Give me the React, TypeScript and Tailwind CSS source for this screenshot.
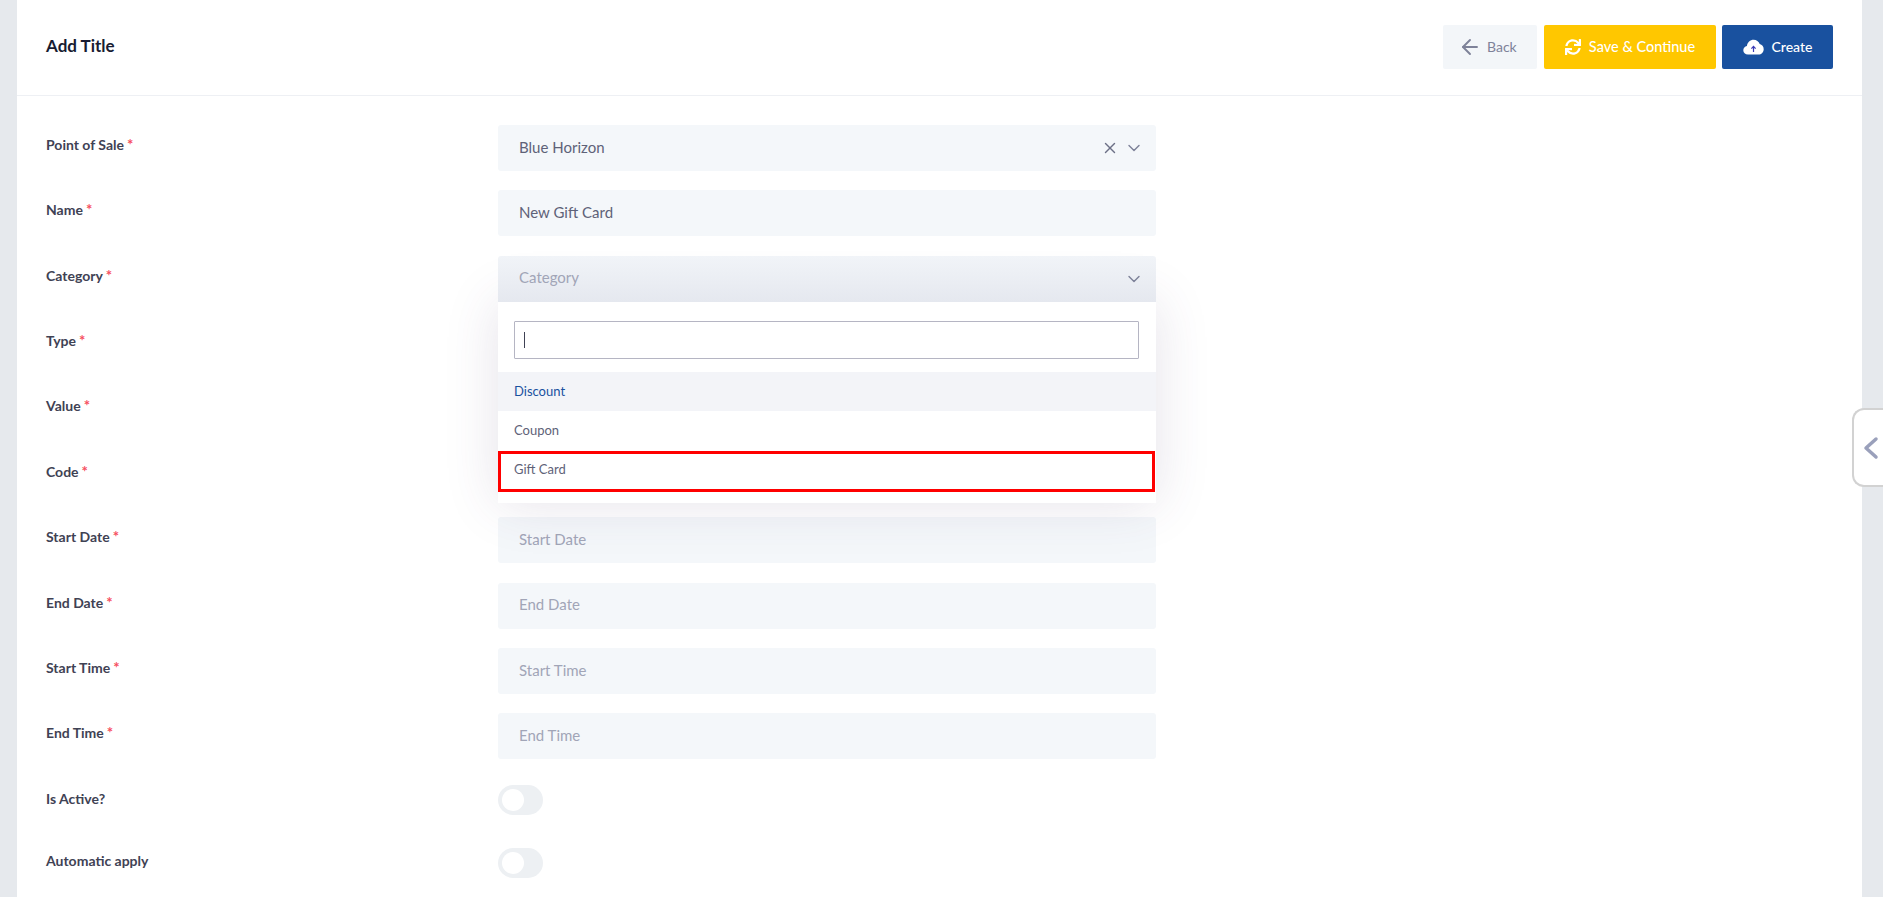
import React from 'react';
import { ArrowLeft, ChevronDown, X } from 'lucide-react';
import { FaSync } from 'react-icons/fa';

const font = "font-['Lato','Liberation_Sans',sans-serif]";

const Label = ({ text, required = true, className = 'pt-[8px]' }: { text: string; required?: boolean; className?: string }) => (
  <label className={`w-[452px] shrink-0 text-[14px] leading-[22px] font-bold text-[#3f4254] ${className}`}>
    {text}
    {required && <span className="ml-[3px] text-[15px] text-[#f64e60]">*</span>}
  </label>
);

const Field = ({ label, value, placeholder }: { label: string; value?: string; placeholder?: string }) => (
  <div className="mb-[19.37px] flex">
    <Label text={label} />
    <div className={`flex h-[46px] w-[658px] items-center rounded-[3px] bg-[#f4f7fa] px-[21px] pb-[2px] text-[15px] ${value ? 'text-[#5e6278]' : 'text-[#a1a5b7]'}`}>
      {value ?? placeholder}
    </div>
  </div>
);

const Toggle = ({ label, className, labelClass }: { label: string; className: string; labelClass: string }) => (
  <div className={`flex ${className}`}>
    <Label text={label} required={false} className={labelClass} />
    <div className="flex h-[30px] w-[45px] items-center rounded-full bg-[#edf0f3] pl-[4px]">
      <div className="h-[22px] w-[22px] rounded-full bg-white" />
    </div>
  </div>
);

const CloudIcon = () => (
  <svg width="21" height="16" viewBox="0 0 21 16" className="shrink-0">
    <path
      d="M5 15.5C2.2 15.5 0.3 13.6 0.3 11.2C0.3 9 1.9 7.4 3.9 7C4.3 3.4 7.2 0.7 10.6 0.7C13.4 0.7 15.8 2.5 16.7 5.1C19 5.6 20.7 7.7 20.7 10.2C20.7 13.1 18.4 15.5 15.5 15.5Z"
      fill="#fff"
    />
    <path d="M10.5 13V7.6M8.4 9.6L10.5 7.4L12.6 9.6" fill="none" stroke="#3b3bb5" strokeWidth="1.2" />
  </svg>
);

export default function App() {
  return (
    <div className={`relative flex h-screen w-full overflow-hidden bg-[#e6e9ed] ${font}`}>
      <div className="ml-[17px] w-[1845px] shrink-0 bg-white">
        {/* Header */}
        <div className="flex h-[96px] items-center border-b border-[#eef0f4] pr-[29px] pl-[29px]">
          <h3 className="-mt-[4px] text-[17px] font-bold text-[#181c32]">Add Title</h3>
          <div className="-mt-[1px] ml-auto flex">
            <button className="flex h-[44px] w-[94px] items-center rounded-[2px] bg-[#f3f6f9] pb-[1px] pl-[15px] text-[14px] text-[#7e8299]">
              <ArrowLeft size={24} strokeWidth={1.9} className="mr-[5px]" />
              Back
            </button>
            <button className="ml-[7px] flex h-[44px] w-[172px] items-center justify-center gap-[8px] rounded-[2px] bg-[#ffc700] pb-[1px] text-[14.5px] font-medium text-white">
              <FaSync size={16} />
              Save &amp; Continue
            </button>
            <button className="ml-[6px] flex h-[44px] w-[111px] items-center justify-center gap-[8px] rounded-[2px] bg-[#19519f] pb-[1px] text-[14px] font-medium text-white">
              <CloudIcon />
              Create
            </button>
          </div>
        </div>

        {/* Form */}
        <div className="pt-[29px] pl-[29px]">
          <div className="mb-[19.37px] flex">
            <Label text="Point of Sale" />
            <div className="flex h-[46px] w-[658px] items-center rounded-[3px] bg-[#f4f7fa] pr-[12px] pl-[21px] text-[15px] text-[#5e6278]">
              <span className="pb-[2px]">Blue Horizon</span>
              <X size={18} strokeWidth={1.9} className="ml-auto text-[#6c7086]" />
              <ChevronDown size={20} strokeWidth={1.7} className="ml-[5px] text-[#7e8299]" />
            </div>
          </div>
          <Field label="Name" value="New Gift Card" />

          <div className="relative mb-[19.37px] flex">
            <Label text="Category" />
            <div className="relative z-20 flex h-[46px] w-[658px] items-center rounded-t-[3px] bg-gradient-to-b from-[#f1f4f8] to-[#e5e8ef] pr-[12px] pl-[21px] text-[15px] text-[#a1a5b7]">
              <span className="pb-[2px]">Category</span>
              <ChevronDown size={20} strokeWidth={1.7} className="ml-auto text-[#7e8299]" />
            </div>
            {/* Open dropdown */}
            <div className="absolute top-[46px] left-[452px] z-10 h-[201px] w-[658px] bg-white pt-[19px] shadow-[0_0_50px_rgba(82,63,105,0.15)]">
              <div className="mr-[17px] ml-[16px] flex h-[38px] items-center rounded-[1px] border border-[#b5b5c3] pl-[9px]">
                <div className="h-[16px] w-px bg-[#3f4254]" />
              </div>
              <div className="mt-[13px] flex h-[39px] items-center bg-[#f3f4f8] px-[16px] pt-[1px] text-[13px] text-[#19519f]">Discount</div>
              <div className="flex h-[39px] items-center px-[16px] pt-[1px] text-[13px] text-[#5e6278]">Coupon</div>
              <div className="mt-[1px] mr-[1px] flex h-[41px] items-center border-[3px] border-[#ff0000] px-[13px] pb-[2px] text-[13px] text-[#5e6278]">Gift Card</div>
            </div>
          </div>

          <Field label="Type" />
          <Field label="Value" />
          <Field label="Code" />
          <Field label="Start Date" placeholder="Start Date" />
          <Field label="End Date" placeholder="End Date" />
          <Field label="Start Time" placeholder="Start Time" />
          <Field label="End Time" placeholder="End Time" />

          <Toggle label="Is Active?" className="mt-[26px]" labelClass="pt-[3px]" />
          <Toggle label="Automatic apply" className="mt-[33px]" labelClass="pt-[2px]" />
        </div>
      </div>

      {/* Side panel handle */}
      <div className="absolute top-[408px] right-0 flex h-[79px] w-[31px] items-center rounded-l-[12px] border-2 border-r-0 border-[#d2d2d2] bg-white pl-[9px]">
        <svg width="16" height="24" viewBox="0 0 16 24" fill="none" stroke="#9aa0bb" strokeWidth="3.5" strokeLinecap="round" strokeLinejoin="round">
          <path d="M13 3L3 12L13 21" />
        </svg>
      </div>
    </div>
  );
}
